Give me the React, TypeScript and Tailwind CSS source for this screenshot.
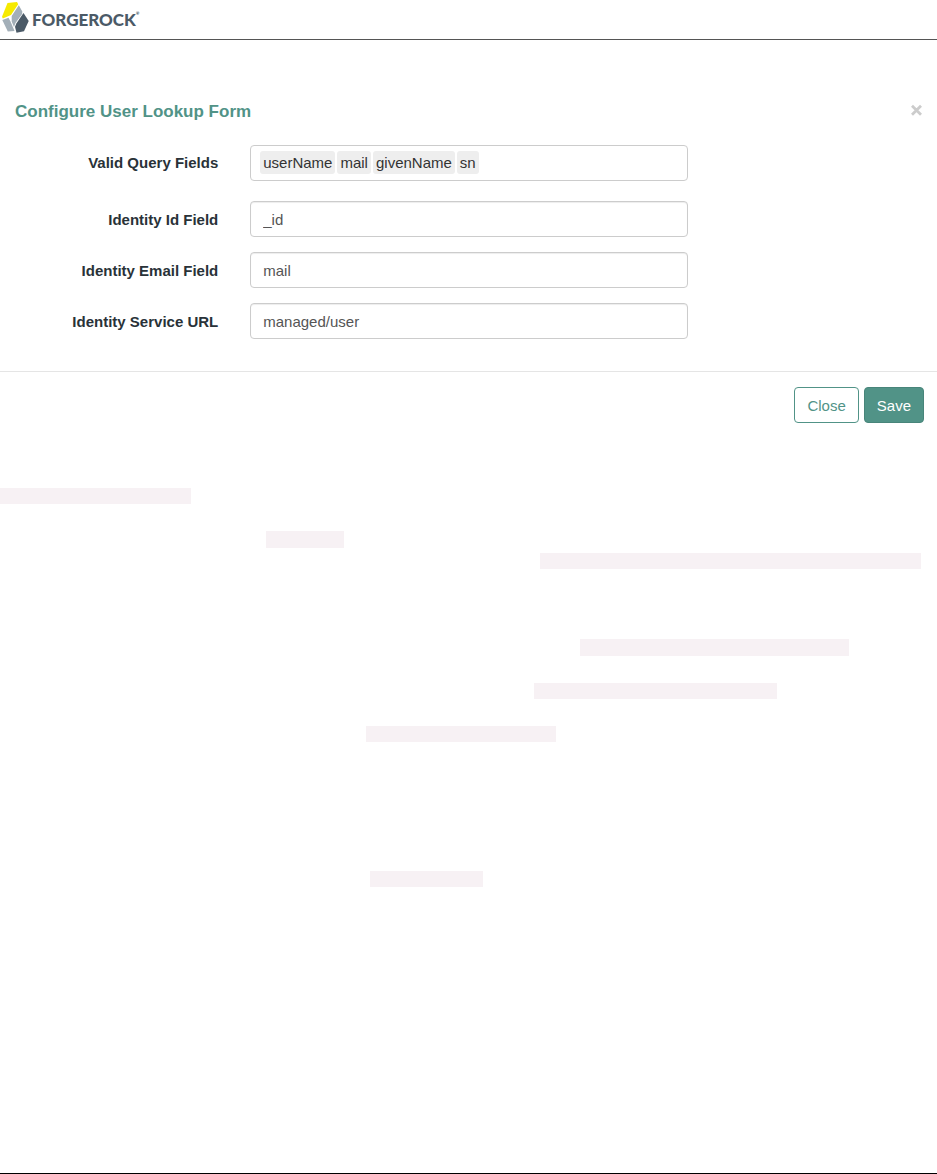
import { FC, useId, useState } from 'react';
import { clsx } from 'clsx';

const queryFields = ['userName', 'mail', 'givenName', 'sn'];

// Highlighted blocks under the form, from top to bottom
const highlights = [
	'mt-[65px] h-4 w-[191px]',
	'mt-[27px] ml-[266px] h-[17px] w-[78px]',
	'mt-[5px] ml-[540px] h-4 w-[381px]',
	'mt-[70px] ml-[580px] h-[17px] w-[269px]',
	'mt-[27px] ml-[534px] h-4 w-[243px]',
	'mt-[27px] ml-[366px] h-4 w-[190px]',
	'mt-[129px] ml-[370px] h-4 w-[113px]',
];

const Logo: FC = () => (
	<div className="flex items-center gap-[3px] pb-[3px] pl-0.5">
		<svg className="h-8 w-[27px]" viewBox="0 0 27 32" aria-hidden="true">
			<path d="M5.500 1 15 0l1.200 2.200L9 13 .8 16.500 0 14.800Z" fill="#f6ea00" />
			<path d="m16.800 3.200 3.500 6.300-.2 2.500-6.600 9-1.500 4-2.300-5.500V14Z" fill="#a3afb8" />
			<path d="m.3 18 6.200-2.200L8.500 19.500l4 9.500-6.700.6Z" fill="#a3afb8" />
			<path d="m21.500 11 5.200 8L22 29.300l-7.500 1.400-1.500-6 1.500-3.500Z" fill="#4b5a67" />
		</svg>
		<span className="flex pt-1 font-['Lato',sans-serif] text-[17px] font-black text-[#4b5a67]">
			FORGEROCK<span className="pt-1 text-[4px]">®</span>
		</span>
	</div>
);

const TextField: FC<{ label: string; initial: string }> = ({ label, initial }) => {
	const id = useId();
	const [value, setValue] = useState(initial);
	return (
		<div className="grid grid-cols-12 items-center">
			<label htmlFor={id} className="col-span-3 pt-0.5 pr-4 text-right font-bold">
				{label}
			</label>
			<div className="col-span-6 pr-[15px] pl-4">
				<input
					id={id}
					type="text"
					value={value}
					onChange={(e) => setValue(e.target.value)}
					className="block h-9 w-full rounded border border-[#ccc] bg-white px-3 text-[#555] shadow-[inset_0_1px_1px_rgba(0,0,0,0.075)]"
				/>
			</div>
		</div>
	);
};

const TagField: FC<{ label: string; tags: string[] }> = ({ label, tags }) => {
	const id = useId();
	return (
		<div className="grid grid-cols-12 items-center">
			<label htmlFor={id} className="col-span-3 pr-4 text-right font-bold">
				{label}
			</label>
			<div className="col-span-6 pr-[15px] pl-4">
				<div className="flex h-9 items-center gap-[2px] rounded border border-[#ccc] bg-white px-[9px] pb-px">
					{tags.map((tag) => (
						<span key={tag} className="rounded-[3px] bg-[#eee] px-[3px] leading-[23px] text-[#333]">
							{tag}
						</span>
					))}
					<input id={id} type="text" className="min-w-0 flex-1 outline-none" />
				</div>
			</div>
		</div>
	);
};

export default function App() {
	return (
		<div className="flex min-h-screen flex-col border-b border-black bg-white font-['Liberation_Sans',Arial,sans-serif] text-[15px] text-[#293238]">
			<header className="flex h-10 items-center border-b border-[#555]">
				<Logo />
			</header>
			<form className="mt-[60px]" onSubmit={(e) => e.preventDefault()}>
				<div className="flex items-center justify-between px-[15px]">
					<h1 className="text-[17px] leading-6 font-bold text-[#519387]">Configure User Lookup Form</h1>
					<button type="button" aria-label="Dismiss" className="-mt-1">
						<svg className="size-3" viewBox="0 0 12 12" fill="none" stroke="#ccc" strokeWidth="2.800">
							<path d="m2 1.800 9 9m0-9-9 9" />
						</svg>
					</button>
				</div>
				<div className="mt-[21px] flex flex-col gap-[15px]">
					<div className="mb-[5px]">
						<TagField label="Valid Query Fields" tags={queryFields} />
					</div>
					<TextField label="Identity Id Field" initial="_id" />
					<TextField label="Identity Email Field" initial="mail" />
					<TextField label="Identity Service URL" initial="managed/user" />
				</div>
				<div className="mt-8 flex justify-end gap-[5px] border-t border-[#e5e5e5] px-[13px] pt-[15px]">
					<button type="button" className="h-9 rounded border border-[#519387] bg-white px-3 pt-0.5 text-[#519387]">
						Close
					</button>
					<button type="submit" className="h-9 rounded border border-[#48857a] bg-[#519387] px-3 pt-0.5 text-white">
						Save
					</button>
				</div>
			</form>
			<div className="flex flex-col">
				{highlights.map((h) => (
					<div key={h} className={clsx('bg-[#f7f1f4]', h)} />
				))}
			</div>
		</div>
	);
}
